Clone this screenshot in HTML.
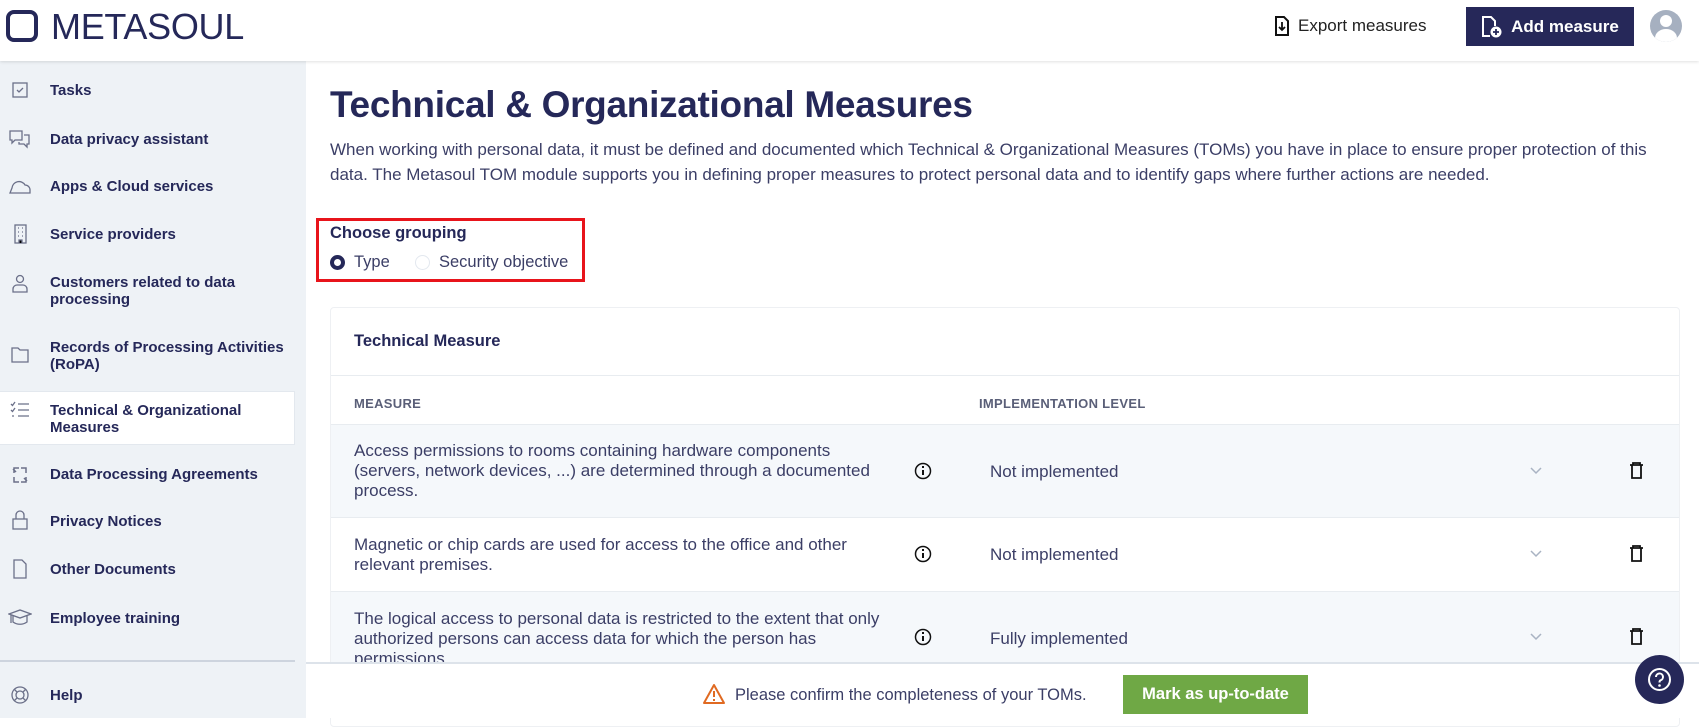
<!DOCTYPE html>
<html><head><meta charset="utf-8"><style>
*{box-sizing:border-box;margin:0;padding:0}
body{width:1699px;height:718px;overflow:hidden;font-family:"Liberation Sans",sans-serif;color:#252859;background:#fff;position:relative}
.hdr{position:absolute;left:0;top:0;width:1699px;height:61px;background:#fff;box-shadow:0 1px 3px rgba(0,0,0,.12);z-index:5}
.logo{position:absolute;left:6px;top:10px;width:32px;height:32px;border:4px solid #252859;border-radius:8px}
.logotxt{position:absolute;left:51px;top:6px;font-size:36px;letter-spacing:-.3px;color:#252859}
.exp{position:absolute;left:1274px;top:16px;font-size:17px;color:#222;display:flex;align-items:center;gap:8px}
.add{position:absolute;left:1466px;top:7px;width:168px;height:39px;background:#262859;color:#fff;font-weight:bold;font-size:17px;display:flex;align-items:center;justify-content:center;gap:8px}
.av{position:absolute;left:1650px;top:10px;width:32px;height:32px;border-radius:50%;background:#a6b0c0;overflow:hidden}
.side{position:absolute;left:0;top:61px;width:306px;height:657px;background:#eef2f6}
.it{position:absolute;left:0;width:295px;font-size:15px;font-weight:bold;line-height:17px;color:#252859}
.it span{position:absolute;left:50px}
.it svg{position:absolute;left:10px}
.act{position:absolute;left:0;top:330px;width:295px;height:54px;background:#fff;border:1px solid #e3e8ee;border-left:none}
h1{position:absolute;left:330px;top:84px;font-size:37px;font-weight:bold;color:#252859;letter-spacing:-.3px}
.para{position:absolute;left:330px;top:137px;width:1330px;font-size:17px;line-height:25px;color:#3b3e66}
.grp{position:absolute;left:316px;top:218px;width:269px;height:64px;border:3px solid #e8141b}
.card{position:absolute;left:330px;top:307px;width:1350px;height:420px;background:#fff;border:1px solid #eef0f3;border-radius:4px}
.row{position:absolute;left:331px;width:1348px;border-top:1px solid #e8ecf0}
.mt{position:absolute;left:23px;font-size:17px;line-height:20px;color:#3b3e66;width:535px}
.lv{position:absolute;left:659px;font-size:17px;color:#3b3e66}
.bot{position:absolute;left:306px;top:662px;width:1393px;height:56px;background:#fff;border-top:2px solid #dde3ea}
</style></head><body>
<div class="hdr">
<div class="logo"></div><div class="logotxt">METASOUL</div>
<div class="exp"><svg width="16" height="20" viewBox="0 0 16 20"><path d="M2 1h8l4 4v14H2z" fill="none" stroke="#111" stroke-width="2"/><path d="M8 6v8M5 11l3 3 3-3" fill="none" stroke="#111" stroke-width="1.8"/></svg>Export measures</div>
<div class="add"><svg width="22" height="22" viewBox="0 0 22 22"><path d="M9 20H2V1h8l4 4v5" fill="none" stroke="#fff" stroke-width="2"/><circle cx="15" cy="16" r="5.5" fill="#fff"/><path d="M15 13v6M12 16h6" stroke="#262859" stroke-width="1.8"/></svg>Add measure</div>
<div class="av"><div style="position:absolute;left:10px;top:5px;width:12px;height:12px;border-radius:50%;background:#fff"></div><div style="position:absolute;left:5px;top:19px;width:22px;height:18px;border-radius:50%;background:#fff"></div></div>
</div>
<div class="side">
<div class="act"></div>
</div>
<div class="it" style="top:82px"><svg width="20" height="20" viewBox="0 0 20 20" style="top:-2px"><rect x="3" y="3" width="14" height="14" fill="none" stroke="#6b7089" stroke-width="1.3"/><path d="M7 10l2 2 4-4" fill="none" stroke="#6b7089" stroke-width="1.3"/></svg><span>Tasks</span></div>
<div class="it" style="top:131px"><svg width="24" height="20" viewBox="0 0 24 20" style="top:-2px;left:8px"><path d="M2 2h12v9H7l-3 3v-3H2zM16 6h5v9h-2v3l-3-3h-5v-2" fill="none" stroke="#6b7089" stroke-width="1.3"/></svg><span>Data privacy assistant</span></div>
<div class="it" style="top:178px"><svg width="24" height="20" viewBox="0 0 24 20" style="top:-2px;left:8px"><path d="M2 17h20v-3a5 5 0 0 0-5-5 7 7 0 0 0-13 3z" fill="none" stroke="#6b7089" stroke-width="1.3"/></svg><span>Apps &amp; Cloud services</span></div>
<div class="it" style="top:226px"><svg width="20" height="22" viewBox="0 0 20 22" style="top:-3px"><rect x="5" y="2" width="11" height="18" fill="none" stroke="#6b7089" stroke-width="1.3"/><path d="M8 5h1M12 5h1M8 9h1M12 9h1M8 13h1M12 13h1M9 20v-3h3v3" stroke="#6b7089" stroke-width="1.3"/></svg><span>Service providers</span></div>
<div class="it" style="top:274px"><svg width="20" height="22" viewBox="0 0 20 22" style="top:-1px"><circle cx="10" cy="6" r="3.5" fill="none" stroke="#6b7089" stroke-width="1.3"/><path d="M3 19v-3a4 4 0 0 1 4-4h6a4 4 0 0 1 4 4v3z" fill="none" stroke="#6b7089" stroke-width="1.3"/></svg><span>Customers related to data<br>processing</span></div>
<div class="it" style="top:339px"><svg width="20" height="20" viewBox="0 0 20 20" style="top:6px"><path d="M2 3h6l2 2h8v12H2z" fill="none" stroke="#6b7089" stroke-width="1.3"/></svg><span>Records of Processing Activities<br>(RoPA)</span></div>
<div class="it" style="top:402px"><svg width="20" height="20" viewBox="0 0 20 20" style="top:-2px"><path d="M8 4h11M8 10h11M8 16h11M1 4l1.5 1.5L5 2M1 10l1.5 1.5L5 8M2 16h2" fill="none" stroke="#6b7089" stroke-width="1.3"/></svg><span>Technical &amp; Organizational<br>Measures</span></div>
<div class="it" style="top:466px"><svg width="20" height="20" viewBox="0 0 20 20" style="top:-1px"><path d="M4 8V3h5M16 12v5h-5M11 3h5v5M9 17H4v-5M3 4l3 3M17 16l-3-3" fill="none" stroke="#6b7089" stroke-width="1.5"/></svg><span>Data Processing Agreements</span></div>
<div class="it" style="top:513px"><svg width="20" height="22" viewBox="0 0 20 22" style="top:-4px"><rect x="3" y="10" width="14" height="10" fill="none" stroke="#6b7089" stroke-width="1.3"/><path d="M6 10V6a4 4 0 0 1 8 0v4" fill="none" stroke="#6b7089" stroke-width="1.3"/></svg><span>Privacy Notices</span></div>
<div class="it" style="top:561px"><svg width="20" height="22" viewBox="0 0 20 22" style="top:-3px"><path d="M4 2h8l4 4v14H4z" fill="none" stroke="#6b7089" stroke-width="1.3"/></svg><span>Other Documents</span></div>
<div class="it" style="top:610px"><svg width="24" height="20" viewBox="0 0 24 20" style="top:-2px;left:8px"><path d="M1 6l11-4 11 4-11 4zM5 8v6c4 3 10 3 14 0V8M3 7v8" fill="none" stroke="#6b7089" stroke-width="1.3"/></svg><span>Employee training</span></div>
<div style="position:absolute;left:0;top:660px;width:295px;height:2px;background:#cdd4de"></div>
<div class="it" style="top:687px"><svg width="20" height="20" viewBox="0 0 20 20" style="top:-2px"><circle cx="10" cy="10" r="8" fill="none" stroke="#6b7089" stroke-width="1.3"/><circle cx="10" cy="10" r="4" fill="none" stroke="#6b7089" stroke-width="1.3"/><path d="M4 4l3 3M16 4l-3 3M4 16l3-3M16 16l-3-3" stroke="#6b7089" stroke-width="1.3"/></svg><span>Help</span></div>

<h1>Technical &amp; Organizational Measures</h1>
<div class="para">When working with personal data, it must be defined and documented which Technical &amp; Organizational Measures (TOMs) you have in place to ensure proper protection of this data. The Metasoul TOM module supports you in defining proper measures to protect personal data and to identify gaps where further actions are needed.</div>
<div class="grp"></div>
<div style="position:absolute;left:330px;top:224px;font-size:16.5px;font-weight:bold">Choose grouping</div>
<div style="position:absolute;left:330px;top:255px;width:15px;height:15px;border-radius:50%;border:4.5px solid #252859;background:#fff"></div>
<div style="position:absolute;left:354px;top:253px;font-size:16.5px;color:#3b3e66">Type</div>
<div style="position:absolute;left:415px;top:255px;width:15px;height:15px;border-radius:50%;border:1.5px solid #e3e8ef"></div>
<div style="position:absolute;left:439px;top:253px;font-size:16.5px;color:#3b3e66">Security objective</div>

<div class="card"></div>
<div style="position:absolute;left:354px;top:332px;font-size:16.5px;font-weight:bold">Technical Measure</div>
<div class="row" style="top:375px;height:50px"></div>
<div style="position:absolute;left:354px;top:396px;font-size:13px;font-weight:bold;color:#5a5f78;letter-spacing:.3px">MEASURE</div>
<div style="position:absolute;left:979px;top:396px;font-size:13px;font-weight:bold;color:#5a5f78;letter-spacing:.3px">IMPLEMENTATION LEVEL</div>

<div class="row" style="top:424px;height:93px;background:#f5f8fb"><div class="mt" style="top:16px;width:520px">Access permissions to rooms containing hardware components (servers, network devices, ...) are determined through a documented process.</div><div class="lv" style="top:37px">Not implemented</div></div>
<div class="row" style="top:517px;height:74px;background:#fff"><div class="mt" style="top:17px">Magnetic or chip cards are used for access to the office and other relevant premises.</div><div class="lv" style="top:27px">Not implemented</div></div>
<div class="row" style="top:591px;height:71px;background:#f5f8fb;overflow:hidden"><div class="mt" style="top:17px">The logical access to personal data is restricted to the extent that only authorized persons can access data for which the person has permissions.</div><div class="lv" style="top:37px">Fully implemented</div></div>

<svg style="position:absolute;left:0;top:0" width="1699" height="718">
<g fill="none" stroke="#111" stroke-width="1.5">
<circle cx="923" cy="471" r="7.5"/><circle cx="923" cy="554" r="7.5"/><circle cx="923" cy="637" r="7.5"/>
</g>
<g fill="#111"><rect x="922" y="470" width="2" height="5"/><rect x="922" y="466" width="2" height="2"/><rect x="922" y="553" width="2" height="5"/><rect x="922" y="549" width="2" height="2"/><rect x="922" y="636" width="2" height="5"/><rect x="922" y="632" width="2" height="2"/></g>
<g fill="none" stroke="#a9b3c3" stroke-width="1.5"><path d="M1531 468l5 5 5-5M1531 551l5 5 5-5M1531 634l5 5 5-5"/></g>
<g fill="none" stroke="#111" stroke-width="1.8"><path d="M1630 465h13M1633 465v-2h7v2M1632 465v13h9v-13"/><path d="M1630 548h13M1633 548v-2h7v2M1632 548v13h9v-13"/><path d="M1630 631h13M1633 631v-2h7v2M1632 631v13h9v-13"/></g>
</svg>

<div class="bot"></div>
<svg style="position:absolute;left:702px;top:683px" width="24" height="22" viewBox="0 0 24 22"><path d="M12 2L22 20H2z" fill="none" stroke="#e06a22" stroke-width="2" stroke-linejoin="round"/><path d="M12 8v6M12 16v2" stroke="#e06a22" stroke-width="2"/></svg>
<div style="position:absolute;left:735px;top:686px;font-size:16.5px;color:#3b3e66">Please confirm the completeness of your TOMs.</div>
<div style="position:absolute;left:1123px;top:675px;width:185px;height:39px;background:#6fa845;color:#fff;font-weight:bold;font-size:16.5px;display:flex;align-items:center;justify-content:center">Mark as up-to-date</div>
<div style="position:absolute;left:1635px;top:655px;width:49px;height:49px;border-radius:50%;background:#262859"></div>
<svg style="position:absolute;left:1647px;top:667px" width="25" height="25" viewBox="0 0 25 25"><circle cx="12.5" cy="12.5" r="10.5" fill="none" stroke="#fff" stroke-width="2"/><path d="M9 10a3.5 3.5 0 1 1 4.5 3.3c-1 .4-1 1-1 2.2" fill="none" stroke="#fff" stroke-width="2"/><circle cx="12.5" cy="18.5" r="1.3" fill="#fff"/></svg>
</body></html>
